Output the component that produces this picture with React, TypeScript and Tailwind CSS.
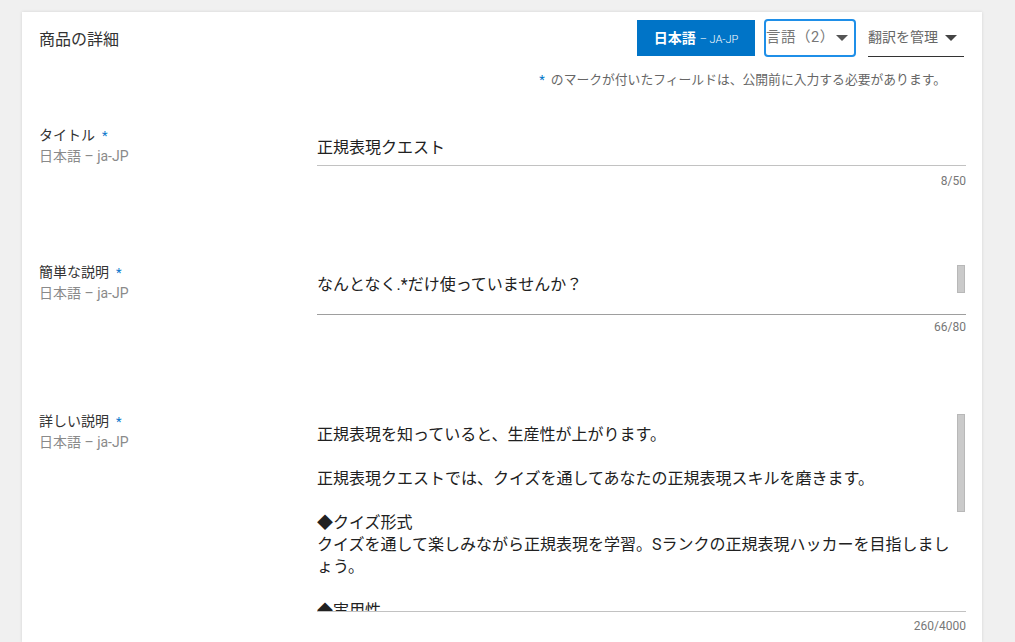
import React from "react";

const font = "font-['Roboto','Noto_Sans_CJK_JP',sans-serif]";

function Label({ title }: { title: string }) {
  return (
    <div className="pt-[1px] text-[14px] leading-[21px]">
      <div className="text-[#333]">
        {title}
        <span className="ml-[7px] text-[13px] text-[#0a78cc]">*</span>
      </div>
      <div className="text-[#8a8a8a]">日本語 – ja-JP</div>
    </div>
  );
}

function Caret({ color }: { color: string }) {
  return (
    <svg width="12" height="6" viewBox="0 0 12 6" className="shrink-0">
      <path d="M0 0 L12 0 L6 6 Z" fill={color} />
    </svg>
  );
}

const longLines = [
  "正規表現を知っていると、生産性が上がります。",
  "",
  "正規表現クエストでは、クイズを通してあなたの正規表現スキルを磨きます。",
  "",
  "◆クイズ形式",
  "クイズを通して楽しみながら正規表現を学習。Sランクの正規表現ハッカーを目指しまし",
  "ょう。",
  "",
  "◆実用性",
];

export default function App() {
  return (
    <div className={`${font} h-[642px] w-full overflow-hidden bg-[#f0f0f0]`}>
      <div className="ml-[22px] mr-[33px] mt-[12px] h-[630px] bg-white pl-[17px] pr-[16px] pt-[7px] shadow-[0_0_3px_rgba(0,0,0,0.12)]">
        {/* header */}
        <div className="flex h-[38px] items-center">
          <div className="flex-1 pt-[4px] text-[16px] text-[#333]">商品の詳細</div>
          <div className="flex h-[36px] w-[118px] items-baseline justify-center bg-[#0074c7] pt-[8px] text-white">
            <span className="text-[14px] font-bold leading-[20px]">日本語</span>
            <span className="ml-[4px] text-[11px] font-light leading-[20px]">– JA-JP</span>
          </div>
          <div className="ml-[9px] flex h-[38px] w-[92px] items-center rounded-[4px] border-2 border-[#1f8fe8] pr-[6px]">
            <span className="flex-1 text-[14.5px] tracking-[0.5px] text-[#777]">言語（2）</span>
            <Caret color="#555" />
          </div>
          <div className="ml-[12px] mr-[2px] flex h-[38px] w-[96px] items-center border-b border-[#333]">
            <span className="flex-1 text-[14px] text-[#666]">翻訳を管理</span>
            <span className="mr-[7px] mt-[1px]">
              <Caret color="#444" />
            </span>
          </div>
        </div>

        {/* note */}
        <div className="mt-[15px] pr-[20px] text-right text-[12.8px] leading-[16px] text-[#666]">
          <span className="mr-[6px] text-[#0074c7]">*</span>のマークが付いたフィールドは、公開前に入力する必要があります。
        </div>

        {/* row 1 */}
        <div className="mt-[36px] grid grid-cols-[278px_1fr]">
          <Label title="タイトル" />
          <div>
            <div className="border-b border-[#c2c2c2] pb-[5px] pt-[12px] text-[16px] leading-[24px] text-[#212121]">
              正規表現クエスト
            </div>
            <div className="mt-[8px] text-right text-[12px] leading-[14px] text-[#777]">8/50</div>
          </div>
        </div>

        {/* row 2 */}
        <div className="mt-[73px] grid grid-cols-[278px_1fr]">
          <Label title="簡単な説明" />
          <div className="mt-[4px]">
            <div className="relative border-b border-[#9e9e9e] pb-[17px] pt-[8px] text-[16px] leading-[24px] text-[#212121]">
              なんとなく.*だけ使っていませんか？
              <div className="absolute right-[1px] top-0 h-[28px] w-[8px] border border-[#b8b8b8] bg-[#cacaca]" />
            </div>
            <div className="mt-[5px] text-right text-[12px] leading-[14px] text-[#777]">66/80</div>
          </div>
        </div>

        {/* row 3 */}
        <div className="mt-[76px] grid grid-cols-[278px_1fr]">
          <Label title="詳しい説明" />
          <div className="mt-[4px]">
            <div className="relative h-[198px] overflow-hidden border-b border-[#c2c2c2] pt-[10px] text-[16px] leading-[22px] text-[#212121]">
              {longLines.map((l, i) => (
                <div key={i} className="h-[22px] whitespace-nowrap">
                  {l}
                </div>
              ))}
              <div className="absolute right-[1px] top-0 h-[98px] w-[8px] border border-[#b8b8b8] bg-[#cacaca]" />
            </div>
            <div className="mt-[7px] text-right text-[12px] leading-[14px] text-[#777]">260/4000</div>
          </div>
        </div>
      </div>
    </div>
  );
}
